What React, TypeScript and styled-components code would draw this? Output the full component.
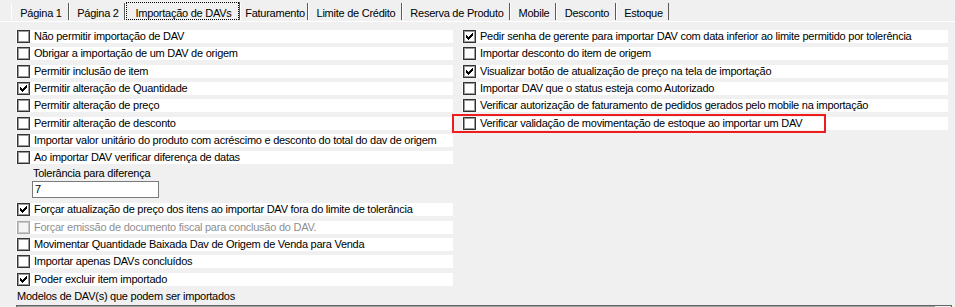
import React from "react";
import styled, { createGlobalStyle } from "styled-components";

const Global = createGlobalStyle`
  html, body { margin: 0; padding: 0; background: #f0f0f0; }
  body { font-family: "Liberation Sans", Arial, sans-serif; font-size: 11px; color: #000; }
`;

const Screen = styled.div`
  width: 955px;
  height: 307px;
  overflow: hidden;
  background: #f0f0f0;
  position: relative;
`;

const TabStrip = styled.div`
  display: flex;
  height: 21px;
  padding-left: 11px;
  box-sizing: border-box;
`;

const Tab = styled.div<{ $w: number; $active?: boolean }>`
  width: ${(p) => p.$w}px;
  box-sizing: border-box;
  margin-top: ${(p) => (p.$active ? 2 : 3)}px;
  height: ${(p) => (p.$active ? 18 : 17)}px;
  border-left: 1px solid #ffffff;
  border-right: 1px solid #5a5a5a;
  display: flex;
  letter-spacing: -0.25px;
  white-space: nowrap;
`;

const TabLabel = styled.span<{ $focus?: boolean }>`
  flex: 1;
  display: flex;
  justify-content: center;
  padding-top: ${(p) => (p.$focus ? 4 : 4)}px;
  padding-left: 2px;
  line-height: 13px;
  box-sizing: border-box;
  border: ${(p) => (p.$focus ? "1px dotted #000" : "none")};
  ${(p) => (p.$focus ? "padding-top: 4px;" : "")}
`;

const Page = styled.div`
  border-top: 1px solid #ffffff;
  padding-top: 8px;
`;

const Columns = styled.div`
  display: flex;
  gap: 9px;
  padding-left: 16px;
`;

const Column = styled.div<{ $w: number }>`
  width: ${(p) => p.$w}px;
  display: flex;
  flex-direction: column;
`;

const Row = styled.div`
  height: calc(52px / 3);
  position: relative;
`;

const Band = styled.div`
  height: 13px;
  background: #ffffff;
  display: flex;
  align-items: center;
  padding-left: 1px;
  gap: 4px;
`;

const Box = styled.span<{ $disabled?: boolean }>`
  width: 13px;
  height: 13px;
  box-sizing: border-box;
  flex: none;
  border: 1px solid ${(p) => (p.$disabled ? "#a8a8a8" : "#333333")};
  box-shadow: inset 0 0 0 1px ${(p) => (p.$disabled ? "#c8c8c8" : "#9a9a9a")};
  background: ${(p) => (p.$disabled ? "#f4f4f4" : "#ffffff")};
  position: relative;
  svg {
    position: absolute;
    left: 2px;
    top: 2px;
  }
`;

const Caption = styled.span<{ $disabled?: boolean }>`
  line-height: 13px;
  white-space: nowrap;
  letter-spacing: -0.25px;
  color: ${(p) => (p.$disabled ? "#8f8f8f" : "#000")};
`;

const Highlight = styled.div`
  position: absolute;
  left: -10px;
  top: -3px;
  width: 374px;
  height: 19px;
  box-sizing: border-box;
  border: 2px solid #ee1c1c;
  pointer-events: none;
`;

const ToleranceBlock = styled.div`
  height: calc(104px / 3);
  display: flex;
  flex-direction: column;
`;

const FieldLabel = styled.span<{ $indent: number }>`
  line-height: 12px;
  margin-top: -2px;
  padding-left: ${(p) => p.$indent}px;
  letter-spacing: -0.25px;
  white-space: nowrap;
`;

const TextInput = styled.div`
  margin-top: 2px;
  margin-left: 16px;
  width: 127px;
  height: 17px;
  box-sizing: border-box;
  border: 1px solid #7a7a7a;
  background: #ffffff;
  padding-left: 2px;
  line-height: 15px;
`;

const ModelsRow = styled.div`
  height: 15px;
  padding-left: 17px;
  line-height: 13px;
  letter-spacing: -0.25px;
`;

const ModelsBox = styled.div`
  margin-left: 16px;
  width: 936px;
  height: 40px;
  box-sizing: border-box;
  border-top: 1px solid #646464;
  border-left: 1px solid #646464;
  border-right: 1px solid #646464;
  box-shadow: inset 0 1px 0 #a0a0a0;
  background: #ffffff;
  display: flex;
  justify-content: flex-end;
`;

const ScrollStub = styled.div`
  width: 16px;
  background: #f0f0f0;
`;

const Check = () => (
  <svg width="7" height="7" viewBox="0 0 7 7" shapeRendering="crispEdges">
    <path
      fill="#000"
      d="M6 0h1v1h-1z M5 1h2v1h-2z M0 2h1v1h-1z M4 2h3v1h-3z M0 3h2v1h-2z M3 3h3v1h-3z M0 4h5v1h-5z M1 5h3v1h-3z M2 6h1v1h-1z"
    />
  </svg>
);

type Item = { label: string; checked?: boolean; disabled?: boolean; highlight?: boolean };

const CheckRow = ({ item }: { item: Item }) => (
  <Row>
    <Band>
      <Box $disabled={item.disabled}>{item.checked && <Check />}</Box>
      <Caption $disabled={item.disabled}>{item.label}</Caption>
    </Band>
    {item.highlight && <Highlight />}
  </Row>
);

const tabs: { label: string; w: number; active?: boolean }[] = [
  { label: "Página 1", w: 58 },
  { label: "Página 2", w: 56 },
  { label: "Importação de DAVs", w: 115, active: true },
  { label: "Faturamento", w: 68 },
  { label: "Limite de Crédito", w: 94 },
  { label: "Reserva de Produto", w: 108 },
  { label: "Mobile", w: 46 },
  { label: "Desconto", w: 60 },
  { label: "Estoque", w: 53 },
];

const leftTop: Item[] = [
  { label: "Não permitir importação de DAV" },
  { label: "Obrigar a importação de um DAV de origem" },
  { label: "Permitir inclusão de item" },
  { label: "Permitir alteração de Quantidade", checked: true },
  { label: "Permitir alteração de preço" },
  { label: "Permitir alteração de desconto" },
  { label: "Importar valor unitário do produto com acréscimo e desconto do total do dav de origem" },
  { label: "Ao importar DAV verificar diferença de datas" },
];

const leftBottom: Item[] = [
  { label: "Forçar atualização de preço dos itens ao importar DAV fora do limite de tolerância", checked: true },
  { label: "Forçar emissão de documento fiscal para conclusão do DAV.", disabled: true },
  { label: "Movimentar Quantidade Baixada Dav de Origem de Venda para Venda" },
  { label: "Importar apenas DAVs concluídos" },
  { label: "Poder excluir item importado", checked: true },
];

const right: Item[] = [
  { label: "Pedir senha de gerente para importar DAV com data inferior ao limite permitido por tolerência", checked: true },
  { label: "Importar desconto do item de origem" },
  { label: "Visualizar botão de atualização de preço na tela de importação", checked: true },
  { label: "Importar DAV que o status esteja como Autorizado" },
  { label: "Verificar autorização de faturamento de pedidos gerados pelo mobile na importação" },
  { label: "Verificar validação de movimentação de estoque ao importar um DAV", highlight: true },
];

export default function App() {
  return (
    <Screen>
      <Global />
      <TabStrip>
        {tabs.map((t) => (
          <Tab key={t.label} $w={t.w} $active={t.active}>
            <TabLabel $focus={t.active}>{t.label}</TabLabel>
          </Tab>
        ))}
      </TabStrip>
      <Page>
        <Columns>
          <Column $w={437}>
            {leftTop.map((it) => (
              <CheckRow key={it.label} item={it} />
            ))}
            <ToleranceBlock>
              <FieldLabel $indent={17}>Tolerância para diferença</FieldLabel>
              <TextInput>7</TextInput>
            </ToleranceBlock>
            {leftBottom.map((it) => (
              <CheckRow key={it.label} item={it} />
            ))}
          </Column>
          <Column $w={486}>
            {right.map((it) => (
              <CheckRow key={it.label} item={it} />
            ))}
          </Column>
        </Columns>
        <ModelsRow>Modelos de DAV(s) que podem ser importados</ModelsRow>
        <ModelsBox>
          <ScrollStub />
        </ModelsBox>
      </Page>
    </Screen>
  );
}
